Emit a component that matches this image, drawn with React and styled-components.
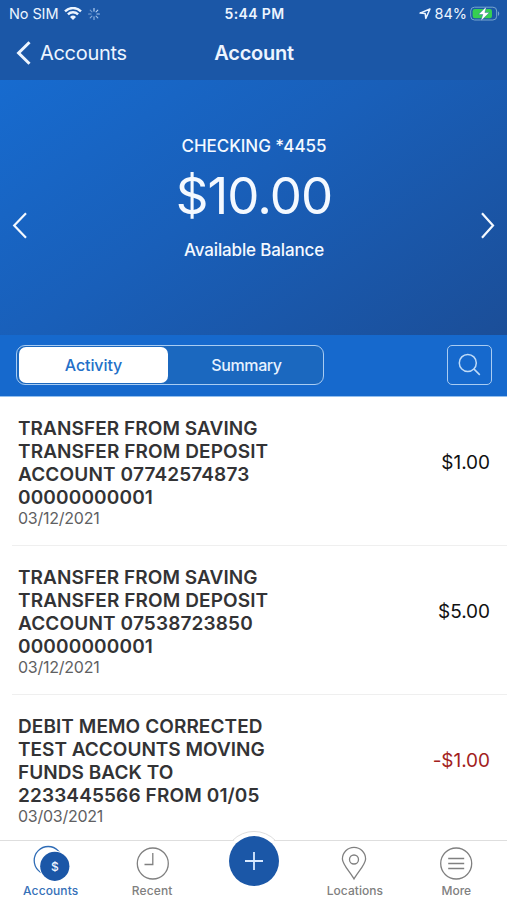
import React from "react";
import styled, { createGlobalStyle } from "styled-components";

const GlobalStyle = createGlobalStyle`
  * {
    box-sizing: border-box;
  }
  body {
    margin: 0;
    background: #ffffff;
    font-family: "Inter", "Liberation Sans", sans-serif;
  }
  button {
    padding: 0;
    border: 0;
    background: none;
    color: inherit;
    font: inherit;
  }
`;

const Screen = styled.div`
  display: flex;
  flex-direction: column;
  width: 507px;
  height: 900px;
  overflow: hidden;
  background: #ffffff;
`;

const Header = styled.header`
  height: 80px;
  flex: none;
  background: #1b57a7;
  color: #edf5ff;
`;

const StatusBar = styled.div`
  display: grid;
  grid-template-columns: 1fr auto 1fr;
  align-items: center;
  height: 28px;
  padding: 0 7px 0 9px;
  font-size: 14px;
`;

const StatusGroup = styled.div`
  display: flex;
  align-items: center;
  justify-content: ${props => (props.$end ? "flex-end" : "flex-start")};
  gap: ${props => props.$gap};
`;

const Label = styled.span`
  font-size: ${props => props.$size}px;
  font-weight: ${props => props.$weight || 400};
  letter-spacing: ${props => props.$spacing || 0}px;
  line-height: 1;
  white-space: nowrap;
`;

const NavBar = styled.nav`
  display: grid;
  grid-template-columns: 1fr auto 1fr;
  align-items: center;
  height: 49px;
  padding: 0 15px 0 16px;
`;

const BackButton = styled.button`
  display: flex;
  align-items: center;
  gap: 8px;
`;

const Hero = styled.section`
  display: flex;
  align-items: center;
  justify-content: space-between;
  flex: none;
  height: 255px;
  padding: 0 11px 0 12px;
  color: #f4f9ff;
  background: linear-gradient(145deg, #176bcf 0%, #195fb9 45%, #1b4e98 100%);
`;

const Arrow = styled.button`
  display: flex;
  margin-top: 36px;
`;

const Balance = styled.div`
  display: flex;
  flex-direction: column;
  align-items: center;
  padding-bottom: 19px;
`;

const Amount = styled.div`
  margin: 17px 0 22px;
  font-size: 51px;
  font-weight: 400;
  line-height: 48px;
  letter-spacing: -0.9px;
`;

const Toolbar = styled.div`
  display: flex;
  align-items: center;
  justify-content: space-between;
  flex: none;
  height: 62px;
  padding: 0 15px 2px 16px;
  background: #1669cd;
  border-bottom: 1px solid #93bfee;
`;

const Segments = styled.div`
  display: flex;
  width: 308px;
  height: 40px;
  padding: 1px 1px 1px 2px;
  border: 1.5px solid #a9ccf2;
  border-radius: 9px;
  background: #1b68bf;
`;

const Segment = styled.button`
  width: ${props => (props.$active ? "149px" : "auto")};
  flex: ${props => (props.$active ? "none" : 1)};
  padding-left: ${props => (props.$active ? 0 : "3px")};
  border-radius: 7px;
  background: ${props => (props.$active ? "#ffffff" : "transparent")};
  color: ${props => (props.$active ? "#2470c8" : "#e7f2ff")};
`;

const SearchButton = styled.button`
  display: flex;
  align-items: center;
  justify-content: center;
  width: 45px;
  height: 40px;
  border: 1.5px solid #a9ccf2;
  border-radius: 5px;
`;

const List = styled.main`
  flex: 1;
  min-height: 0;
  overflow: hidden;
`;

const Row = styled.article`
  display: flex;
  align-items: center;
  justify-content: space-between;
  height: 149px;
  margin-left: 12px;
  padding: 3px 17px 0 6px;
  border-bottom: 1px solid #efefef;
`;

const Description = styled.div`
  font-size: 19px;
  font-weight: 600;
  line-height: 23.2px;
  color: #333335;
`;

const Line = styled.div`
  white-space: nowrap;
  letter-spacing: ${props => props.$spacing || 0}px;
`;

const PostedOn = styled.div`
  font-size: 16px;
  line-height: 19px;
  letter-spacing: -0.25px;
  color: #606062;
`;

const RowAmount = styled.div`
  padding-bottom: 20px;
  font-size: 19px;
  line-height: 23px;
  letter-spacing: -0.05px;
  color: ${props => (props.$negative ? "#a3221d" : "#111111")};
`;

const TabBar = styled.footer`
  display: grid;
  grid-template-columns: repeat(5, 1fr);
  flex: none;
  height: 60px;
  border-top: 1px solid #dedede;
  background: #ffffff;
`;

const Tab = styled.button`
  display: flex;
  flex-direction: column;
  align-items: center;
  padding-top: 4px;
  color: ${props => (props.$active ? "#3470b8" : "#808080")};
`;

const TabIcon = styled.svg`
  display: block;
  flex: none;
  margin-bottom: 2px;
`;

const AddButton = styled.button`
  position: relative;
  display: flex;
  justify-content: center;
  svg {
    position: absolute;
    top: -11px;
    left: 20px;
  }
`;

const WifiIcon = () => (
  <svg width="18" height="14" viewBox="0 0 18 14" fill="none" stroke="currentColor" strokeWidth="2.4">
    <path d="M1 4.3a11.400 11.400 0 0 1 16 0M3.900 7.300a7.200 7.200 0 0 1 10.200 0" />
    <path d="M9 13 6 9.900a4.300 4.300 0 0 1 6 0Z" fill="currentColor" stroke="none" />
  </svg>
);

const SpinnerIcon = () => (
  <svg width="12" height="12" viewBox="0 0 12 12" stroke="#c3dcfa" strokeWidth="1.1" strokeLinecap="round">
    {[0, 45, 90, 135, 180, 225, 270, 315].map((angle, i) => (
      <path key={angle} d="M6 .6v2.5" opacity={1 - i * 0.07} transform={`rotate(${angle} 6 6)`} />
    ))}
  </svg>
);

const LocationIcon = () => (
  <svg width="12" height="12" viewBox="0 0 12 12" fill="none" stroke="currentColor" strokeWidth="1.5" strokeLinejoin="round">
    <path d="M11 1 6.8 10.4 6.2 5.6 1 5.1Z" />
  </svg>
);

const BatteryIcon = () => (
  <svg width="30" height="16" viewBox="0 0 30 16">
    <rect x=".7" y="1.2" width="26" height="12.8" rx="3.8" fill="none" stroke="#78a6cf" />
    <rect x="2.6" y="3" width="19.4" height="9.2" rx="2.2" fill="#36cf52" />
    <path d="M28 5.2c1.7.8 1.7 3.8 0 4.7Z" fill="#78a6cf" />
    <path d="M16.4.6 8.4 8.5h4.4l-2 6.5L19.4 6.6h-4.5Z" fill="#ffffff" stroke="#1b57a7" strokeWidth=".4" />
  </svg>
);

const Chevron = ({ flip }) => (
  <svg width="16" height="28" viewBox="0 0 16 28" fill="none" stroke="currentColor" strokeWidth="2.2">
    <path d={flip ? "M2 1.2 13 13.5 2 25.800" : "M14 1.2 2.2 13.5 14 25.800"} />
  </svg>
);

const transactions = [
  {
    lines: [
      ["TRANSFER FROM SAVING", 0.07],
      ["TRANSFER FROM DEPOSIT", 0.1],
      ["ACCOUNT 07742574873", 0.15],
      ["00000000001", 0.15]
    ],
    date: "03/12/2021",
    amount: "$1.00"
  },
  {
    lines: [
      ["TRANSFER FROM SAVING", 0.07],
      ["TRANSFER FROM DEPOSIT", 0.1],
      ["ACCOUNT 07538723850", 0.15],
      ["00000000001", 0.15]
    ],
    date: "03/12/2021",
    amount: "$5.00"
  },
  {
    lines: [
      ["DEBIT MEMO CORRECTED", 0.08],
      ["TEST ACCOUNTS MOVING", 0],
      ["FUNDS BACK TO", 0.05],
      ["2233445566 FROM 01/05", 0.13]
    ],
    date: "03/03/2021",
    amount: "-$1.00",
    negative: true
  }
];

const Transaction = ({ lines, date, amount, negative }) => (
  <Row>
    <div>
      <Description>
        {lines.map(([text, spacing]) => (
          <Line key={text} $spacing={spacing}>
            {text}
          </Line>
        ))}
      </Description>
      <PostedOn>{date}</PostedOn>
    </div>
    <RowAmount $negative={negative}>{amount}</RowAmount>
  </Row>
);

const App = () => (
  <Screen>
    <GlobalStyle />
    <Header>
      <StatusBar>
        <StatusGroup $gap="6px">
          <Label $size={14.5} $spacing={-0.1}>No SIM</Label>
          <WifiIcon />
          <SpinnerIcon />
        </StatusGroup>
        <Label $size={14} $weight={600} $spacing={0.35}>5:44 PM</Label>
        <StatusGroup $end $gap="3px">
          <LocationIcon />
          <Label $size={14.5}>84%</Label>
          <BatteryIcon />
        </StatusGroup>
      </StatusBar>
      <NavBar>
        <BackButton>
          <svg width="16" height="24" viewBox="0 0 16 24" fill="none" stroke="currentColor" strokeWidth="3">
            <path d="M13.5 1.2 2.6 12l10.900 10.800" />
          </svg>
          <Label $size={20} $spacing={-0.3}>Accounts</Label>
        </BackButton>
        <Label $size={20} $weight={600} $spacing={-0.25}>Account</Label>
      </NavBar>
    </Header>

    <Hero>
      <Arrow>
        <Chevron />
      </Arrow>
      <Balance>
        <Label $size={17} $weight={500} $spacing={-0.06}>CHECKING *4455</Label>
        <Amount>$10.00</Amount>
        <Label $size={17} $weight={500} $spacing={-0.15}>Available Balance</Label>
      </Balance>
      <Arrow>
        <Chevron flip />
      </Arrow>
    </Hero>

    <Toolbar>
      <Segments>
        <Segment $active>
          <Label $size={16} $weight={550} $spacing={-0.1}>Activity</Label>
        </Segment>
        <Segment>
          <Label $size={16} $weight={550} $spacing={-0.4}>Summary</Label>
        </Segment>
      </Segments>
      <SearchButton>
        <svg width="24" height="24" viewBox="0 0 24 24" fill="none" stroke="#bfdbf8" strokeWidth="1.5">
          <circle cx="9.8" cy="9.9" r="8.5" />
          <path d="m15.8 15.9 6 6" />
        </svg>
      </SearchButton>
    </Toolbar>

    <List>
      {transactions.map((transaction, i) => (
        <Transaction key={i} {...transaction} />
      ))}
    </List>

    <TabBar>
      <Tab $active>
        <TabIcon width="39" height="38" viewBox="-1 0 39 38">
          <circle cx="16.2" cy="15.5" r="14" fill="none" stroke="#2f6cb6" strokeWidth="1.3" />
          <circle cx="22.8" cy="21.3" r="15.6" fill="#ffffff" />
          <circle cx="22.8" cy="21.3" r="14.6" fill="#1b57a7" />
          <text x="22.8" y="25.7" textAnchor="middle" fontSize="12" fontWeight="500" fill="#edf5ff">$</text>
        </TabIcon>
        <Label $size={12} $weight={500} $spacing={0.1}>Accounts</Label>
      </Tab>
      <Tab>
        <TabIcon width="37" height="38" viewBox="0 0 37 38" fill="none" stroke="currentColor" strokeWidth="1.3">
          <circle cx="18.800" cy="18.5" r="15.500" />
          <path d="M18.800 8v11.500h-8.300" />
        </TabIcon>
        <Label $size={12} $weight={500} $spacing={0.15}>Recent</Label>
      </Tab>
      <AddButton>
        <svg width="62" height="64" viewBox="0 0 62 64">
          <path d="M9 12.5a30 30 0 0 1 44 0Z" fill="#ffffff" />
          <path d="M9.5 10.500a30 30 0 0 1 43 0" fill="none" stroke="#dedede" />
          <circle cx="31" cy="31" r="25" fill="#1b57a7" />
          <path d="M22 31h18M31 22v18" stroke="#d9eaff" strokeWidth="1.800" />
        </svg>
      </AddButton>
      <Tab>
        <TabIcon width="37" height="38" viewBox="0 0 37 38" fill="none" stroke="currentColor" strokeWidth="1.3">
          <path d="M18 34C14.5 27.700 6.400 19.200 6.400 13.900a11.600 11.600 0 0 1 23.200 0c0 5.300-8.100 13.800-11.600 20.100Z" />
          <circle cx="18" cy="14.500" r="4.500" />
        </TabIcon>
        <Label $size={12} $weight={500} $spacing={0.05}>Locations</Label>
      </Tab>
      <Tab>
        <TabIcon width="37" height="38" viewBox="0 0 37 38" fill="none" stroke="currentColor" strokeWidth="1.3">
          <circle cx="18.200" cy="18.5" r="15.500" />
          <path d="M10.200 13.500h16M10.200 18.500h16M10.200 23.500h16" />
        </TabIcon>
        <Label $size={12} $weight={500}>More</Label>
      </Tab>
    </TabBar>
  </Screen>
);

export default App;
